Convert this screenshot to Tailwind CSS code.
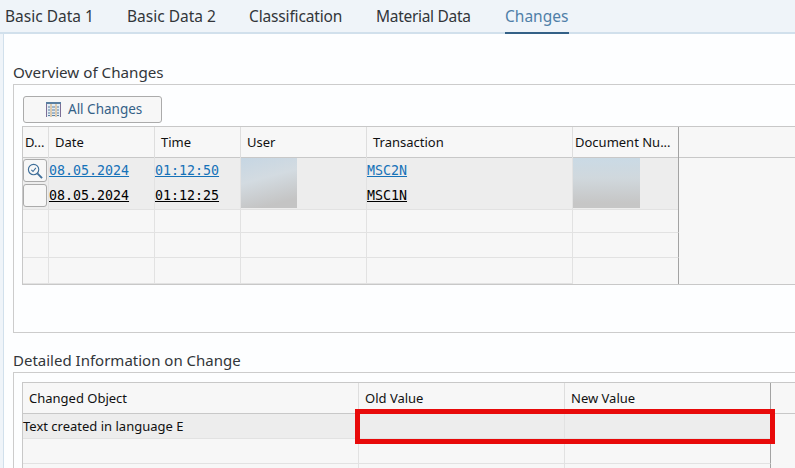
<!DOCTYPE html>
<html lang="en">
  <head>
    <meta charset="UTF-8" />
    <title>Material Changes</title>
    <script src="https://cdn.jsdelivr.net/npm/@tailwindcss/browser@4"></script>
  </head>
  <body class="bg-[#eff4f9] overflow-hidden font-['Noto_Sans',sans-serif] text-[#32363a]">
    <div class="relative w-[795px] h-[468px] overflow-hidden">
      <!-- tabs -->
      <nav class="flex h-[34px] pl-[5px] border-b-2 border-[#d1e0ec] text-[15.5px] leading-[32px]">
        <a class="w-[122px] h-[34px]">Basic Data 1</a>
        <a class="w-[122px] h-[34px]">Basic Data 2</a>
        <a class="w-[127px] h-[34px] tracking-[-0.15px]">Classification</a>
        <a class="w-[129px] h-[34px] tracking-[-0.3px]">Material Data</a>
        <a class="w-[64px] h-[34px] text-[#4f7fa8] border-b-2 border-[#346187]">Changes</a>
      </nav>

      <main class="ml-[3px] h-[434px] bg-[#fdfeff] border-l border-[#d1e0ec] pl-[9px] pt-[28px]">
        <!-- overview -->
        <h2 class="h-[22px] text-[15.2px] leading-[21px]">Overview of Changes</h2>
        <section class="h-[249px] border border-r-0 border-[#cccccc] pl-[8px] pt-[11px]">
          <button class="flex items-center gap-[7px] ml-px pl-[22px] w-[139px] h-[27px] bg-[#f7f7f7] border border-[#ababab] rounded-[3px] text-[13.5px] text-[#346187]">
            <svg width="15" height="15" viewBox="0 0 15 15">
              <rect x="0" y="0" width="15" height="15" fill="#e3edf5" />
              <rect x="0" y="0" width="15" height="2" fill="#5a7fa0" />
              <path d="M0.5 2v13M14.5 2v13" stroke="#7d6f96" fill="none" />
              <path d="M5 2v13M10 2v13" stroke="#d9a868" fill="none" />
              <path d="M2 5h2M6 5h3M11 5h2M2 8h2M6 8h3M11 8h2M2 11h2M6 11h3M11 11h2M2 13.5h2M6 13.5h3M11 13.5h2" stroke="#5a7fa0" fill="none" />
            </svg>
            All Changes
          </button>

          <div class="relative mt-[3px] h-[159px] bg-[#f7f7f7] border border-r-0 border-[#c8c8c8] text-[13px] text-[#111111]">
            <div class="grid grid-cols-[26px_106px_86px_126px_206px_106px_1fr] h-[31px] border-b border-[#c8c8c8] leading-[31px]">
              <div class="pl-[2px] border-r border-[#dedede]">D...</div>
              <div class="pl-[6px] border-r border-[#dedede]">Date</div>
              <div class="pl-[6px] border-r border-[#dedede]">Time</div>
              <div class="pl-[6px] border-r border-[#dedede]">User</div>
              <div class="pl-[6px] border-r border-[#dedede]">Transaction</div>
              <div class="pl-[2px] border-r border-[#a3a3a3] whitespace-nowrap">Document Nu...</div>
              <div></div>
            </div>
            <div class="grid grid-cols-[26px_106px_86px_126px_206px_106px_1fr] h-[25px] font-['DejaVu_Sans_Mono',monospace] text-[13.3px] text-[#1672b8] underline leading-[26px]">
              <div class="bg-[#ededed] border-r border-b border-[#e2e2e2] pt-px">
                <span class="flex items-center justify-center w-[24px] h-[23px] bg-[#f7f7f7] border border-[#ababab] rounded-[3px]">
                  <svg width="16" height="16" viewBox="0 0 17 17" fill="none" stroke="#3f6f9a">
                    <circle cx="7" cy="7" r="5.5" stroke-width="1.2" />
                    <path d="M4.6 7.2l1.8 1.8 3-3.8" stroke-width="1.1" />
                    <path d="M11 11l5 5" stroke-width="2" />
                  </svg>
                </span>
              </div>
              <div class="bg-[#ededed] border-r border-b border-[#e2e2e2]">08.05.2024</div>
              <div class="bg-[#ededed] border-r border-b border-[#e2e2e2]">01:12:50</div>
              <div class="bg-[#ededed] border-r border-b border-[#e2e2e2]"></div>
              <div class="bg-[#ededed] border-r border-b border-[#e2e2e2]">MSC2N</div>
              <div class="bg-[#ededed] border-r border-b border-r-[#a3a3a3] border-b-[#e2e2e2]"></div>
              <div></div>
            </div>
            <div class="grid grid-cols-[26px_106px_86px_126px_206px_106px_1fr] h-[25px] font-['DejaVu_Sans_Mono',monospace] text-[13.3px] text-black underline leading-[26px]">
              <div class="bg-[#ededed] border-r border-b border-[#e2e2e2] pt-px">
                <span class="block w-[24px] h-[23px] bg-[#f7f7f7] border border-[#ababab] rounded-[3px]"></span>
              </div>
              <div class="bg-[#ededed] border-r border-b border-[#e2e2e2]">08.05.2024</div>
              <div class="bg-[#ededed] border-r border-b border-[#e2e2e2]">01:12:25</div>
              <div class="bg-[#ededed] border-r border-b border-[#e2e2e2]"></div>
              <div class="bg-[#ededed] border-r border-b border-[#e2e2e2]">MSC1N</div>
              <div class="bg-[#ededed] border-r border-b border-r-[#a3a3a3] border-b-[#e2e2e2]"></div>
              <div></div>
            </div>
            <div class="grid grid-cols-[26px_106px_86px_126px_206px_106px_1fr] h-[25px]">
              <div class="border-r border-b border-[#e2e2e2]"></div>
              <div class="border-r border-b border-[#e2e2e2]"></div>
              <div class="border-r border-b border-[#e2e2e2]"></div>
              <div class="border-r border-b border-[#e2e2e2]"></div>
              <div class="border-r border-b border-[#e2e2e2]"></div>
              <div class="border-r border-b border-r-[#a3a3a3] border-b-[#e2e2e2]"></div>
              <div></div>
            </div>
            <div class="grid grid-cols-[26px_106px_86px_126px_206px_106px_1fr] h-[25px]">
              <div class="border-r border-b border-[#e2e2e2]"></div>
              <div class="border-r border-b border-[#e2e2e2]"></div>
              <div class="border-r border-b border-[#e2e2e2]"></div>
              <div class="border-r border-b border-[#e2e2e2]"></div>
              <div class="border-r border-b border-[#e2e2e2]"></div>
              <div class="border-r border-b border-r-[#a3a3a3] border-b-[#e2e2e2]"></div>
              <div></div>
            </div>
            <div class="grid grid-cols-[26px_106px_86px_126px_206px_106px_1fr] h-[26px]">
              <div class="border-r border-b border-[#e2e2e2]"></div>
              <div class="border-r border-b border-[#e2e2e2]"></div>
              <div class="border-r border-b border-[#e2e2e2]"></div>
              <div class="border-r border-b border-[#e2e2e2]"></div>
              <div class="border-r border-b border-[#e2e2e2]"></div>
              <div class="border-r border-[#a3a3a3]"></div>
              <div></div>
            </div>
            <!-- blurred out -->
            <div class="absolute left-[218px] top-[31px] w-[56px] h-[50px] bg-linear-[165deg] from-[#c6d6e3] via-[#d3dbe1] via-40% to-[#c4c4c4] to-85%"></div>
            <div class="absolute left-[550px] top-[31px] w-[67px] h-[50px] bg-linear-to-b from-[#cadae5] via-[#d0d8dd] via-40% to-[#c6c6c6] to-90%"></div>
          </div>
        </section>

        <!-- detail -->
        <h2 class="mt-[17px] h-[22px] text-[15px] leading-[21px]">Detailed Information on Change</h2>
        <section class="h-[100px] border-t border-l border-[#cccccc] pl-[8px] pt-[9px]">
          <div class="bg-[#f7f7f7] border-t border-l border-[#c8c8c8] text-[13px] text-[#111111] h-[90px]">
            <div class="grid grid-cols-[336px_206px_206px_1fr] h-[31px] border-b border-[#c8c8c8] leading-[30px]">
              <div class="pl-[6px] border-r border-[#dedede]">Changed Object</div>
              <div class="pl-[6px] border-r border-[#dedede]">Old Value</div>
              <div class="pl-[6px] border-r border-[#a3a3a3]">New Value</div>
              <div></div>
            </div>
            <div class="grid grid-cols-[336px_206px_206px_1fr] h-[25px] leading-[24px]">
              <div class="bg-[#ededed] border-r border-b border-[#e2e2e2]">Text created in language E</div>
              <div class="bg-[#ededed] border-r border-b border-[#e2e2e2]"></div>
              <div class="bg-[#ededed] border-r border-b border-r-[#a3a3a3] border-b-[#e2e2e2]"></div>
              <div></div>
            </div>
            <div class="grid grid-cols-[336px_206px_206px_1fr] h-[25px]">
              <div class="border-r border-b border-[#e2e2e2]"></div>
              <div class="border-r border-b border-[#e2e2e2]"></div>
              <div class="border-r border-b border-r-[#a3a3a3] border-b-[#e2e2e2]"></div>
              <div></div>
            </div>
            <div class="grid grid-cols-[336px_206px_206px_1fr] h-[8px]">
              <div class="border-r border-[#e2e2e2]"></div>
              <div class="border-r border-[#e2e2e2]"></div>
              <div class="border-r border-[#a3a3a3]"></div>
              <div></div>
            </div>
          </div>
        </section>
      </main>

      <!-- red annotation -->
      <div class="absolute left-[355px] top-[409px] w-[420px] h-[35px] border-[5px] border-[#e80a0a]"></div>
    </div>
  </body>
</html>
